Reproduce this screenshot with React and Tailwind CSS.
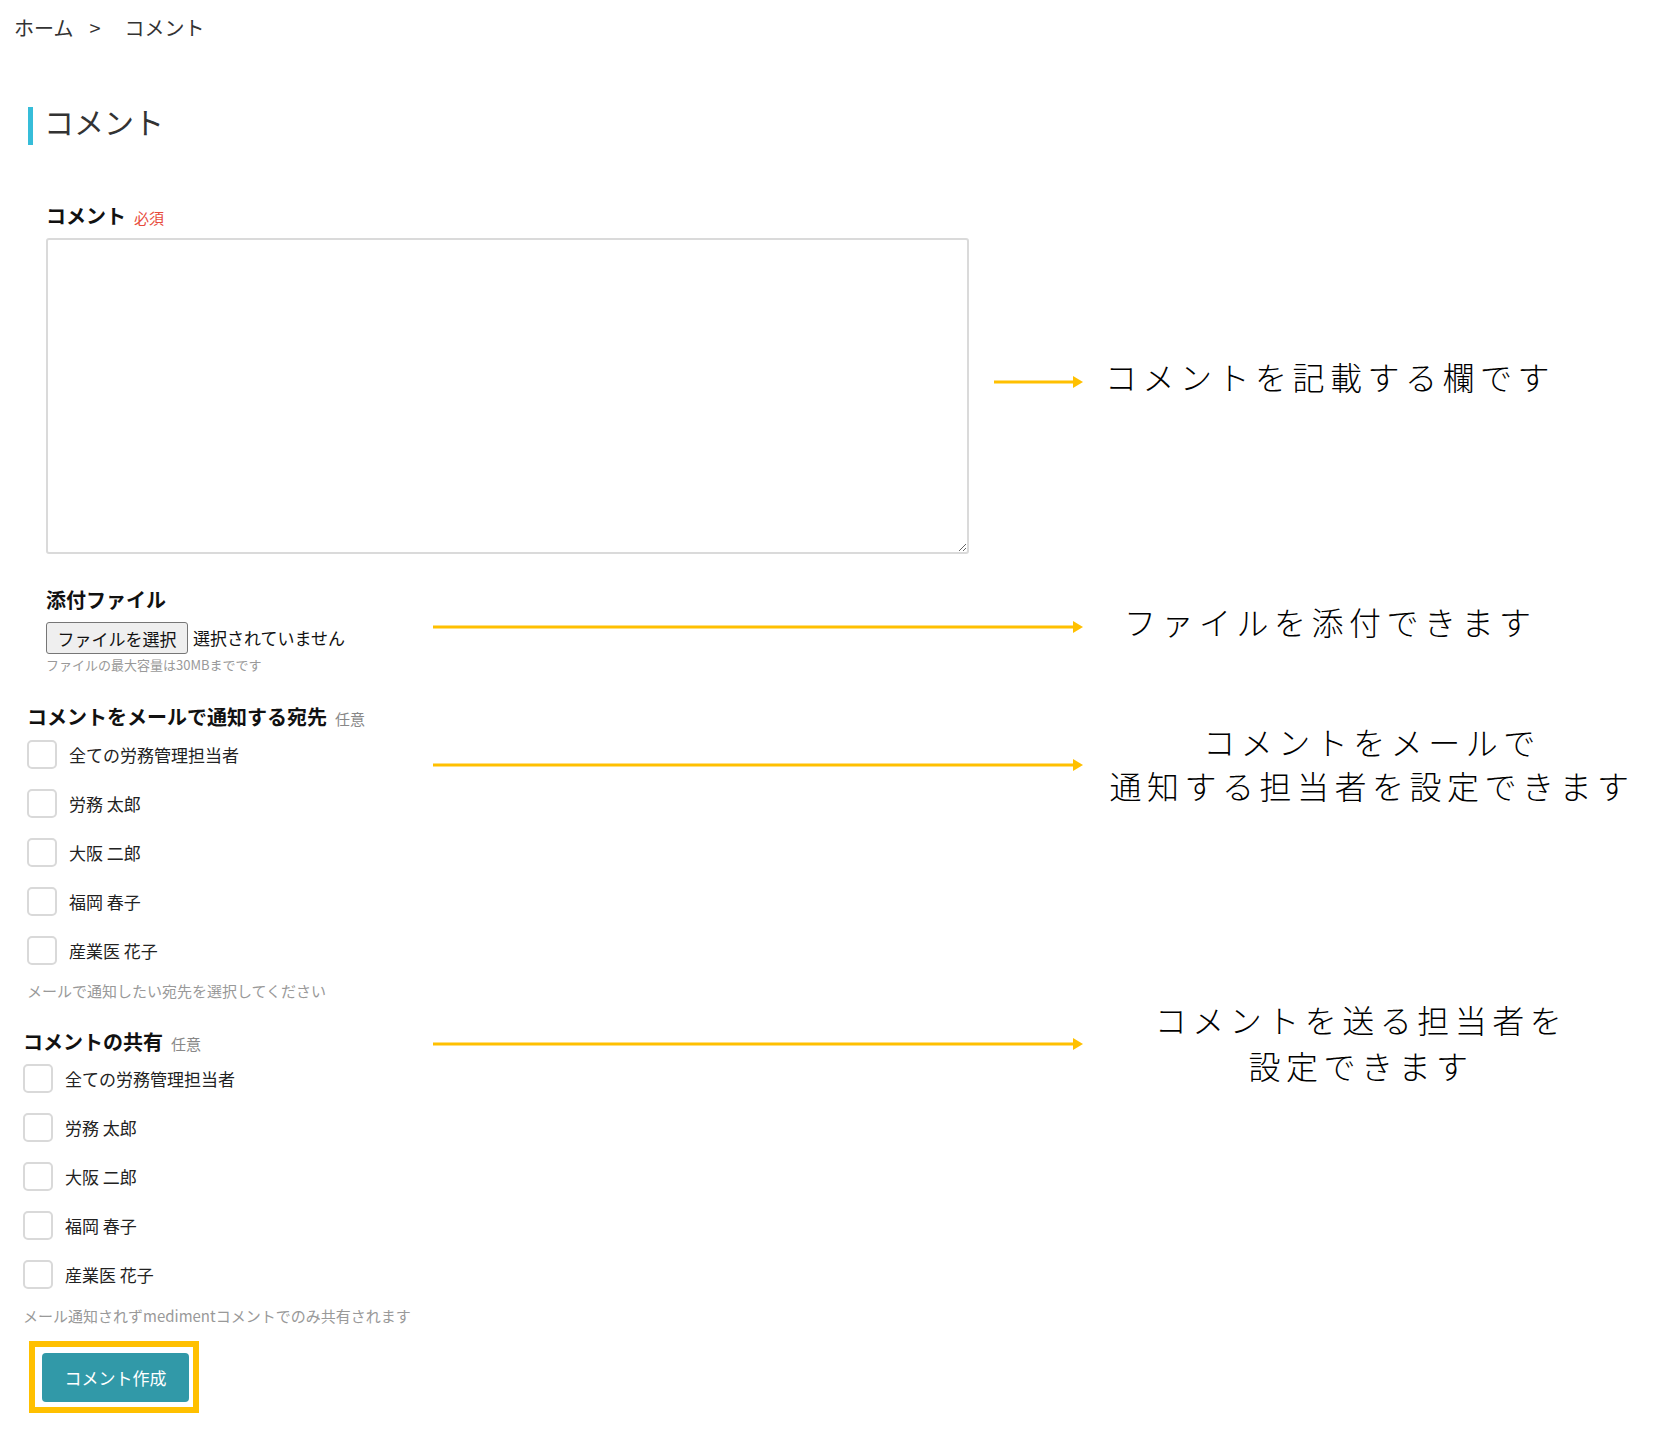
import React from "react";

const members = ["全ての労務管理担当者", "労務 太郎", "大阪 二郎", "福岡 春子", "産業医 花子"];

function Arrow({ width }) {
  return (
    <svg width={width} height="14" viewBox={`0 0 ${width} 14`} className="block">
      <rect x="0" y="5.5" width={width - 8} height="3" fill="#ffc000" />
      <polygon points={`${width - 10},1 ${width},7 ${width - 10},13`} fill="#ffc000" />
    </svg>
  );
}

function CheckList({ gapClass }) {
  return (
    <div className={`flex flex-col gap-[19px] ${gapClass}`}>
      {members.map((m) => (
        <label key={m} className="flex items-center h-[30px]">
          <span className="w-[30px] h-[29px] border-2 border-[#d9d9d9] rounded-[5px] bg-white shrink-0" />
          <span className="ml-[12px] text-[17px] leading-none text-[#222]">{m}</span>
        </label>
      ))}
    </div>
  );
}

export default function App() {
  return (
    <div className="relative w-[1657px] h-[1438px] bg-white text-[#222] font-['Noto_Sans_CJK_JP',sans-serif]">
      {/* breadcrumb */}
      <div className="pl-[14px] pt-[14px] h-[42px] text-[20px] leading-[28px] text-[#333] flex">
        <span>ホーム</span>
        <span className="ml-[16px] mr-[24px]">&gt;</span>
        <span>コメント</span>
      </div>

      {/* page title */}
      <div className="mt-[65px] ml-[28px] flex items-center h-[38px]">
        <span className="w-[5px] h-[38px] bg-[#36bdd9]" />
        <h1 className="ml-[11px] pb-[10px] text-[30px] leading-none text-[#333] font-normal">コメント</h1>
      </div>

      {/* comment */}
      <div className="pl-[46px] mt-[59px]">
        <div className="flex items-baseline h-[24px] leading-[24px]">
          <span className="text-[20px] font-bold text-[#111]">コメント</span>
          <span className="ml-[8px] text-[15px] text-[#e74c3c]">必須</span>
        </div>
        <textarea className="mt-[10px] block w-[923px] h-[316px] border-2 border-[#dadada] rounded-[3px] outline-none" />

        {/* attachment */}
        <div className="mt-[34px] h-[24px] leading-[24px] text-[20px] font-bold text-[#111]">添付ファイル</div>
        <div className="mt-[10px] flex items-center h-[32px]">
          <button className="w-[142px] h-[32px] border border-[#767676] rounded-[3px] bg-[#efefef] text-[17px] leading-none text-[#111]">
            ファイルを選択
          </button>
          <span className="ml-[5px] text-[17px] text-[#111]">選択されていません</span>
        </div>
        <div className="mt-[3px] text-[13px] leading-[16px] text-[#999]">ファイルの最大容量は30MBまでです</div>
      </div>

      {/* mail notify */}
      <div className="pl-[27px] mt-[32px]">
        <div className="flex items-baseline h-[24px] leading-[24px]">
          <span className="text-[20px] font-bold text-[#111]">コメントをメールで通知する宛先</span>
          <span className="ml-[8px] text-[15px] text-[#888]">任意</span>
        </div>
        <CheckList gapClass="mt-[10px]" />
        <div className="mt-[16px] text-[15px] leading-[20px] text-[#999]">メールで通知したい宛先を選択してください</div>
      </div>

      {/* share */}
      <div className="pl-[23px] mt-[29px]">
        <div className="flex items-baseline h-[24px] leading-[24px]">
          <span className="text-[20px] font-bold text-[#111]">コメントの共有</span>
          <span className="ml-[8px] text-[15px] text-[#888]">任意</span>
        </div>
        <CheckList gapClass="mt-[9px]" />
        <div className="mt-[17px] text-[15px] leading-[20px] text-[#999]">メール通知されずmedimentコメントでのみ共有されます</div>

        <div className="mt-[15px] ml-[6px] inline-flex border-[6px] border-[#ffc000] pl-[7px] pt-[6px] pr-[4px] pb-[5px]">
          <button className="w-[147px] h-[49px] bg-[#3199a8] rounded-[4px] text-white text-[17px]">コメント作成</button>
        </div>
      </div>

      {/* annotations */}
      <div className="absolute left-[994px] top-[375px]">
        <Arrow width={89} />
      </div>
      <div className="absolute left-[1105px] top-[354px] text-[32px] leading-[44px] tracking-[5.5px] font-light text-black whitespace-nowrap">
        コメントを記載する欄です
      </div>

      <div className="absolute left-[433px] top-[620px]">
        <Arrow width={650} />
      </div>
      <div className="absolute left-[1124px] top-[599px] text-[32px] leading-[44px] tracking-[5.5px] font-light text-black whitespace-nowrap">
        ファイルを添付できます
      </div>

      <div className="absolute left-[433px] top-[758px]">
        <Arrow width={650} />
      </div>
      <div className="absolute left-[1072px] top-[719px] w-[600px] text-center text-[32px] leading-[44px] tracking-[5.5px] font-light text-black">
        <div>コメントをメールで</div>
        <div>通知する担当者を設定できます</div>
      </div>

      <div className="absolute left-[433px] top-[1037px]">
        <Arrow width={650} />
      </div>
      <div className="absolute left-[1061px] top-[996px] w-[600px] text-center text-[32px] leading-[46px] tracking-[5.5px] font-light text-black">
        <div>コメントを送る担当者を</div>
        <div>設定できます</div>
      </div>
    </div>
  );
}
